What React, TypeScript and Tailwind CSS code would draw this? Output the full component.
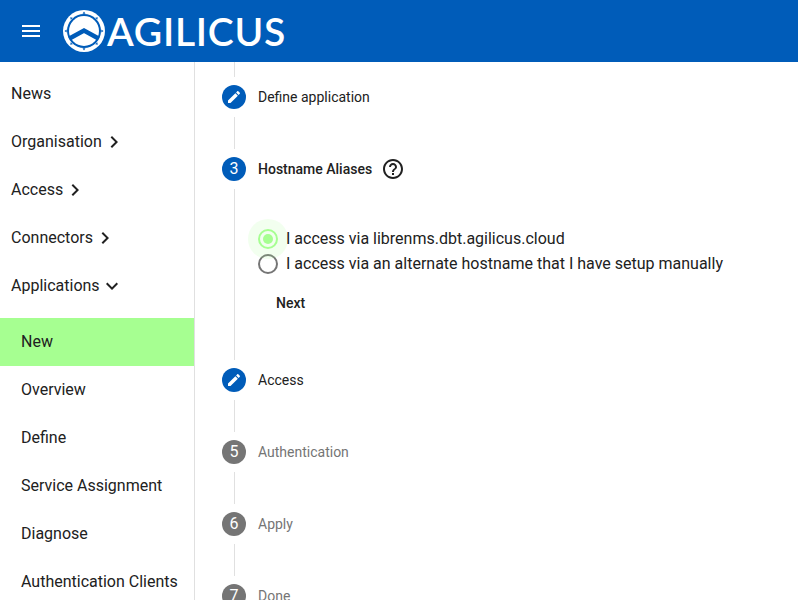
import React from 'react';

const navItems = [
  { label: 'News' },
  { label: 'Organisation', arrow: 'right' },
  { label: 'Access', arrow: 'right' },
  { label: 'Connectors', arrow: 'right' },
  { label: 'Applications', arrow: 'down' },
];

const subItems = ['New', 'Overview', 'Define', 'Service Assignment', 'Diagnose', 'Authentication Clients'];

function Logo() {
  return (
    <svg width="42" height="42" viewBox="0 0 42 42" className="shrink-0">
      <circle cx="21" cy="21" r="21" fill="#fff" />
      <circle cx="21" cy="21" r="17" fill="#005cb9" />
      <circle cx="21" cy="21" r="15" fill="#fff" />
      <path d="M6.5 28.5L21 20.5l14.5 8" fill="none" stroke="#005cb9" strokeWidth="4.5" />
      <g fill="#005cb9">
        <path d="M21 1.5l1.5 2.2h-3z" />
        <path d="M21 40.5l1.5-2.2h-3z" />
        <path d="M1.5 21l2.2-1.5v3z" />
        <path d="M40.5 21l-2.2-1.5v3z" />
        <path d="M7.2 7.2l2.6.5-2.1 2.1z" />
        <path d="M34.8 7.2l-2.6.5 2.1 2.1z" />
        <path d="M7.2 34.8l2.6-.5-2.1-2.1z" />
        <path d="M34.8 34.8l-2.6-.5 2.1-2.1z" />
      </g>
    </svg>
  );
}

function Arrow({ dir }: { dir: string }) {
  return (
    <svg width="24" height="24" viewBox="0 0 24 24" fill="currentColor">
      <path d={dir === 'down' ? 'M7.41 8.59L12 13.17l4.59-4.58L18 10l-6 6-6-6z' : 'M8.59 16.59L13.17 12 8.59 7.41 10 6l6 6-6 6z'} />
    </svg>
  );
}

function StepRow({ mark, label, state }: { mark: string; label: string; state: 'edit' | 'current' | 'idle' }) {
  const idle = state === 'idle';
  return (
    <div className="flex h-[40px] items-center pl-[27px]">
      <div className={`flex h-6 w-6 shrink-0 items-center justify-center rounded-full text-[16px] text-white ${idle ? 'bg-[#757575]' : 'bg-[#005cb9]'}`}>
        {mark === 'edit' ? (
          <svg width="16" height="16" viewBox="0 0 24 24" fill="currentColor">
            <path d="M3 17.25V21h3.75L17.81 9.94l-3.75-3.75L3 17.25zM20.71 7.04c.39-.39.39-1.02 0-1.41l-2.34-2.34c-.39-.39-1.02-.39-1.41 0l-1.83 1.83 3.75 3.75 1.83-1.83z" />
          </svg>
        ) : (
          mark
        )}
      </div>
      <span className={`ml-3 text-[14px] ${idle ? 'text-[#757575]' : 'text-[#212121]'} ${state === 'current' ? 'font-medium' : ''}`}>{label}</span>
      {state === 'current' && (
        <svg width="24" height="24" viewBox="0 0 24 24" fill="#212121" className="ml-[9px]">
          <path d="M11 18h2v-2h-2v2zm1-16C6.48 2 2 6.48 2 12s4.48 10 10 10 10-4.48 10-10S17.52 2 12 2zm0 18c-4.41 0-8-3.59-8-8s3.59-8 8-8 8 3.59 8 8-3.59 8-8 8zm0-14c-2.21 0-4 1.79-4 4h2c0-1.1.9-2 2-2s2 .9 2 2c0 2-3 1.75-3 5h2c0-2.25 3-2.5 3-5 0-2.21-1.79-4-4-4z" />
        </svg>
      )}
    </div>
  );
}

function Line({ className }: { className: string }) {
  return <div className={`ml-[39px] w-px bg-[#e0e0e0] ${className}`} />;
}

export default function App() {
  return (
    <div className="flex h-screen flex-col overflow-hidden bg-white font-['Roboto',sans-serif] text-[#212121]">
      <header className="flex h-[62px] shrink-0 items-center bg-[#005cb9] text-white">
        <svg width="24" height="24" viewBox="0 0 24 24" fill="currentColor" className="ml-[19px] shrink-0">
          <path d="M3 18h18v-2H3v2zm0-5h18v-2H3v2zm0-7v2h18V6H3z" />
        </svg>
        <div className="ml-[20px] flex items-center">
          <Logo />
          <span className="ml-[2px] font-['Lato',sans-serif] text-[39px] leading-none font-semibold tracking-[0.75px]">AGILICUS</span>
        </div>
      </header>

      <div className="flex min-h-0 flex-1">
        <nav className="w-[195px] shrink-0 border-r border-[#e0e0e0] pt-2">
          {navItems.map((item) => (
            <div key={item.label} className="flex h-12 items-center pl-[11px] text-[16px]">
              {item.label}
              {item.arrow && <Arrow dir={item.arrow} />}
            </div>
          ))}
          <div className="pt-2">
            {subItems.map((label) => (
              <div key={label} className={`flex h-12 items-center pl-[21px] text-[16px] ${label === 'New' ? 'bg-[#a6ff91]' : ''}`}>
                {label}
              </div>
            ))}
          </div>
        </nav>

        <main className="min-w-0 flex-1">
          <Line className="h-[15px]" />
          <StepRow mark="edit" label="Define application" state="edit" />
          <Line className="h-[32px]" />
          <StepRow mark="3" label="Hostname Aliases" state="current" />
          <div className="ml-[39px] h-[171px] border-l border-[#e0e0e0] pt-[38px] pl-[23px]">
            <label className="flex h-[24px] items-center text-[16px]">
              <span className="relative flex h-5 w-5 shrink-0 items-center justify-center rounded-full border-2 border-[#a6ff91]">
                <span className="absolute -inset-[12px] rounded-full bg-[#a6ff91]/15" />
                <span className="h-[10px] w-[10px] rounded-full bg-[#a6ff91]" />
              </span>
              <span className="relative ml-2">I access via librenms.dbt.agilicus.cloud</span>
            </label>
            <label className="flex h-[26px] items-center text-[16px]">
              <span className="h-5 w-5 shrink-0 rounded-full border-2 border-[#757575]" />
              <span className="ml-2">I access via an alternate hostname that I have setup manually</span>
            </label>
            <button className="mt-[16px] ml-[18px] block text-[14px] leading-5 font-medium">Next</button>
          </div>
          <StepRow mark="edit" label="Access" state="edit" />
          <Line className="h-[32px]" />
          <StepRow mark="5" label="Authentication" state="idle" />
          <Line className="h-[32px]" />
          <StepRow mark="6" label="Apply" state="idle" />
          <Line className="h-[32px]" />
          <StepRow mark="7" label="Done" state="idle" />
        </main>
      </div>
    </div>
  );
}
